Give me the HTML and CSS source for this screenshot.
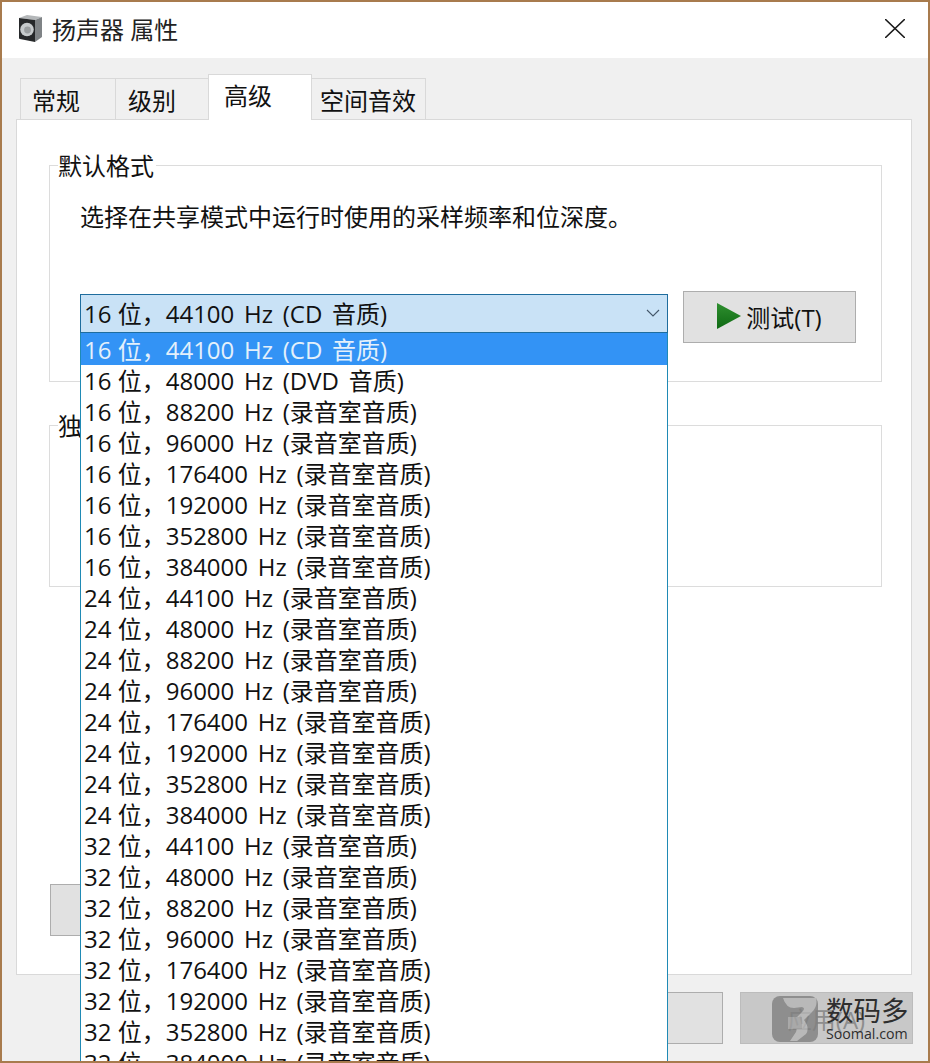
FILE: index.html
```html
<!DOCTYPE html>
<html lang="zh-CN">
<head>
<meta charset="utf-8">
<title>扬声器 属性</title>
<link rel="stylesheet" href="styles.css">
</head>
<body>
<div class="window">
  <header class="titlebar">
    <svg class="app-icon" width="25" height="29" viewBox="0 0 25 29">
      <path d="M1 4 L9 1 L24 3 L17 6Z" fill="#b4b7b9"/>
      <path d="M17 6 L24 3 L24 23 L17 28Z" fill="#7f8386"/>
      <path d="M1 4 L17 6 L17 28 L2 25 Q1 25 1 24Z" fill="#26282a"/>
      <circle cx="9" cy="15.5" r="6.8" fill="#c6cacc"/>
      <circle cx="9.5" cy="16" r="3.4" fill="#9a9ea0"/>
    </svg>
    <span class="title">扬声器 属性</span>
    <svg class="close" width="20" height="19" viewBox="0 0 20 19"><path d="M0 0 L20 19 M20 0 L0 19" stroke="#1a1a1a" stroke-width="1.6" fill="none"/></svg>
  </header>
  <div class="content">
    <nav class="tabs">
      <span class="tab tab-first">常规</span>
      <span class="tab tab-second">级别</span>
      <span class="tab tab-active">高级</span>
      <span class="tab tab-last">空间音效</span>
    </nav>
    <section class="panel">
      <div class="group group-format">
        <span class="legend">默认格式</span>
        <p class="desc">选择在共享模式中运行时使用的采样频率和位深度。</p>
        <div class="format-row">
          <div class="combo-slot"></div>
          <button class="btn btn-test">
            <svg width="24" height="26" viewBox="0 0 24 26"><defs><linearGradient id="g" x1="0" y1="0" x2="0" y2="1"><stop offset="0" stop-color="#2f8f2f"/><stop offset="1" stop-color="#0f6a14"/></linearGradient></defs><path d="M0 0 L24 13 L0 26Z" fill="url(#g)"/></svg>
            <span>测试(T)</span>
          </button>
        </div>
      </div>
      <div class="group group-exclusive">
        <span class="legend">独占模式</span>
      </div>
      <button class="btn btn-restore"></button>
    </section>
    <footer class="actions">
      <button class="btn btn-cancel"></button>
      <button class="btn btn-apply">应用(A)</button>
    </footer>
  </div>

  <div class="dropdown">
    <div class="combo">
      <span class="item-text"><span class="bits">16 位，</span>44100 Hz (CD 音质)</span>
      <svg width="14" height="8" viewBox="0 0 14 8"><path d="M1 1 L7 7 L13 1" stroke="#44576a" stroke-width="1.1" fill="none"/></svg>
    </div>
    <ul class="list">
      <li class="selected"><span class="bits">16 位，</span>44100 Hz (CD 音质)</li>
      <li><span class="bits">16 位，</span>48000 Hz (DVD 音质)</li>
      <li><span class="bits">16 位，</span>88200 Hz (录音室音质)</li>
      <li><span class="bits">16 位，</span>96000 Hz (录音室音质)</li>
      <li><span class="bits">16 位，</span>176400 Hz (录音室音质)</li>
      <li><span class="bits">16 位，</span>192000 Hz (录音室音质)</li>
      <li><span class="bits">16 位，</span>352800 Hz (录音室音质)</li>
      <li><span class="bits">16 位，</span>384000 Hz (录音室音质)</li>
      <li><span class="bits">24 位，</span>44100 Hz (录音室音质)</li>
      <li><span class="bits">24 位，</span>48000 Hz (录音室音质)</li>
      <li><span class="bits">24 位，</span>88200 Hz (录音室音质)</li>
      <li><span class="bits">24 位，</span>96000 Hz (录音室音质)</li>
      <li><span class="bits">24 位，</span>176400 Hz (录音室音质)</li>
      <li><span class="bits">24 位，</span>192000 Hz (录音室音质)</li>
      <li><span class="bits">24 位，</span>352800 Hz (录音室音质)</li>
      <li><span class="bits">24 位，</span>384000 Hz (录音室音质)</li>
      <li><span class="bits">32 位，</span>44100 Hz (录音室音质)</li>
      <li><span class="bits">32 位，</span>48000 Hz (录音室音质)</li>
      <li><span class="bits">32 位，</span>88200 Hz (录音室音质)</li>
      <li><span class="bits">32 位，</span>96000 Hz (录音室音质)</li>
      <li><span class="bits">32 位，</span>176400 Hz (录音室音质)</li>
      <li><span class="bits">32 位，</span>192000 Hz (录音室音质)</li>
      <li><span class="bits">32 位，</span>352800 Hz (录音室音质)</li>
      <li><span class="bits">32 位，</span>384000 Hz (录音室音质)</li>
    </ul>
  </div>

  <div class="watermark">
    <svg class="wm-logo" width="46" height="46" viewBox="0 0 46 46">
      <rect x="0" y="0" width="46" height="46" rx="8" fill="#808080"/>
      <path d="M11 2 L44 2 Q46 10 40 16 L32 24 Q38 32 34 38 L25 45 L18 45 L24 36 Q26 30 20 26 L30 16 Q34 12 30 11 L22 12 Q14 12 11 2Z" fill="#b6b6b6"/>
      <path d="M16 21 L30 21 L30 33 L16 33Z" fill="#a2a2a2"/>
    </svg>
    <div class="wm-text">
      <span class="wm-cn">数码多</span>
      <span class="wm-en">Soomal.com</span>
    </div>
  </div>
</div>
</body>
</html>
```
FILE: styles.css
```css
* { box-sizing: border-box; }
html, body { margin: 0; padding: 0; width: 930px; height: 1063px; overflow: hidden; }
body { font-family: "Open Sans", "Noto Sans CJK SC", sans-serif; color: #111; background: #fff; }
.window {
  position: relative;
  width: 930px;
  height: 1063px;
  border: 2px solid #a87b4d;
  display: flex;
  flex-direction: column;
  overflow: hidden;
  background: #f0f0f0;
}
.titlebar {
  height: 56px;
  background: #fff;
  display: flex;
  align-items: center;
  padding: 0 23px 3px 16px;
  flex: none;
}
.title { font-size: 24px; margin-left: 9px; color: #222; }
.close { margin-left: auto; }
.content { flex: 1; padding: 20px 15px 0 14px; display: flex; flex-direction: column; }
.tabs { display: flex; height: 41px; align-items: flex-end; padding-left: 4px; flex: none; }
.tab {
  height: 41px;
  font-size: 24px;
  line-height: 44px;
  background: #f0f0f0;
  border: 1px solid #d9d9d9;
  border-bottom: 0;
  border-right: 0;
  white-space: nowrap;
}
.tab-first { width: 95px; padding-left: 11px; }
.tab-second { width: 93px; padding-left: 12px; }
.tab-active {
  width: 104px;
  height: 46px;
  line-height: 42px;
  padding-left: 15px;
  background: #fff;
  margin-bottom: -1px;
  position: relative;
  z-index: 1;
  border-right: 1px solid #d9d9d9;
}
.tab-last { width: 114px; padding-left: 8px; border-right: 1px solid #d9d9d9; border-left: 0; }
.panel {
  flex: none;
  height: 856px;
  width: 896px;
  background: #fff;
  border: 1px solid #d9d9d9;
  padding: 45px 28px 0 32px;
  display: flex;
  flex-direction: column;
}
.group { position: relative; border: 1px solid #dcdcdc; width: 833px; flex: none; }
.group-format { height: 217px; padding: 34px 0 0 30px; }
.group-exclusive { height: 162px; margin-top: 43px; }
.legend {
  position: absolute;
  left: 8px;
  top: -15px;
  padding-right: 2px;
  font-size: 24px;
  line-height: 30px;
  background: #fff;
}
.desc { margin: 0; font-size: 24px; line-height: 34px; }
.format-row { display: flex; margin-top: 57px; align-items: center; }
.combo-slot { width: 587px; height: 38px; flex: none; }
.btn {
  font-family: inherit;
  background: #e1e1e1;
  border: 1px solid #adadad;
  color: #111;
  padding: 0;
}
.btn-test {
  margin-left: 16px;
  width: 173px;
  height: 52px;
  font-size: 24px;
  display: flex;
  align-items: center;
  justify-content: center;
  gap: 5px;
  padding-bottom: 2px;
}
.btn-restore { width: 173px; height: 52px; margin-top: 297px; margin-left: 1px; flex: none; }
.actions { display: flex; padding-left: 534px; margin-top: 17px; gap: 17px; flex: none; }
.btn-cancel { width: 173px; height: 52px; flex: none; }
.btn-apply { width: 173px; height: 52px; flex: none; font-size: 24px; color: #8e8e8e; background: #c8c8c8; border-color: #bcbcbc; text-align: center; }
.dropdown {
  position: absolute;
  left: 78px;
  top: 292px;
  width: 588px;
}
.bits { word-spacing: 0; }
.combo {
  height: 39px;
  background: #c9e2f6;
  border: 1px solid #1f6d9e;
  display: flex;
  align-items: center;
  justify-content: space-between;
  padding: 0 7px 2px 3px;
  font-size: 24px;
  word-spacing: 3.5px;
}
.list {
  list-style: none;
  margin: 0;
  padding: 0;
  height: 740px;
  background: #fff;
  border: 1px solid #1f8ab5;
  border-top: 0;
  font-size: 24px;
  word-spacing: 3.5px;
}
.list li { height: 31px; line-height: 31px; padding-left: 3px; white-space: nowrap; }
.list .selected { background: #3393f5; color: #e4f0fb; height: 32px; line-height: 33px; }
.watermark {
  position: absolute;
  left: 770px;
  top: 994px;
  display: flex;
  gap: 8px;
  align-items: center;
}
.wm-logo { opacity: 0.8; }
.wm-text { display: flex; flex-direction: column; width: 84px; }
.wm-cn { font-size: 27.5px; line-height: 30px; color: #2e2e2e; white-space: nowrap; }
.wm-en { font-size: 14.2px; line-height: 16px; color: #2e2e2e; }
```
